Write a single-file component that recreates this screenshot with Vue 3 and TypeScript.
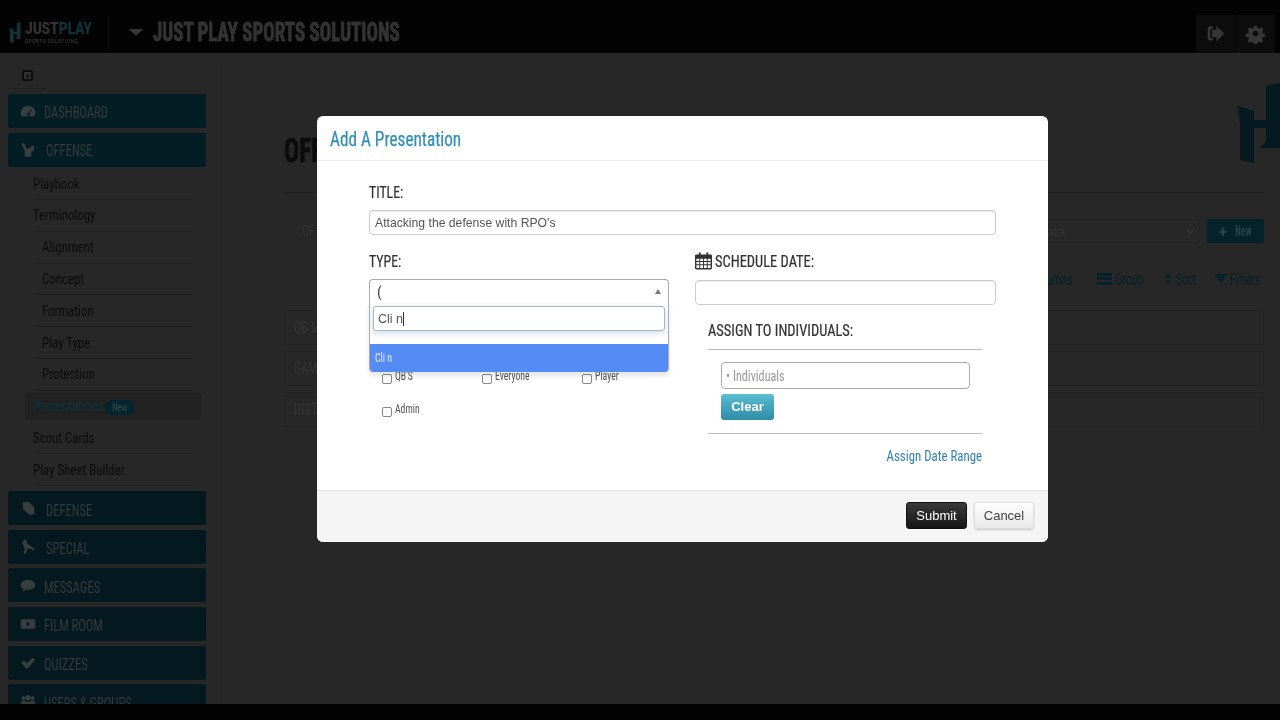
<script setup lang="ts">
interface NavItem { label: string; icon: string; wide?: boolean }
const topNav: NavItem[] = [
  { label: 'DASHBOARD', icon: 'dash' },
  { label: 'OFFENSE', icon: 'off', wide: true },
]
const subNav = [
  { label: 'Playbook', indent: false },
  { label: 'Terminology', indent: false },
  { label: 'Alignment', indent: true },
  { label: 'Concept', indent: true },
  { label: 'Formation', indent: true },
  { label: 'Play Type', indent: true },
  { label: 'Protection', indent: true },
  { label: 'Presentations', indent: false, active: true },
  { label: 'Scout Cards', indent: false },
  { label: 'Play Sheet Builder', indent: false },
]
const bottomNav: NavItem[] = [
  { label: 'DEFENSE', icon: 'def', wide: true },
  { label: 'SPECIAL', icon: 'kick', wide: true },
  { label: 'MESSAGES', icon: 'chat' },
  { label: 'FILM ROOM', icon: 'film' },
  { label: 'QUIZZES', icon: 'check' },
  { label: 'USERS & GROUPS', icon: 'users' },
]
const rows = ['QB M', 'GAM', 'INST']
const roles = ["QB'S", 'Everyone', 'Player', 'Admin']
</script>

<template>
  <div class="screen">
    <header class="topbar">
      <div class="brand">
        <svg class="brand-mark" viewBox="0 0 42 80" width="14" height="21">
          <path d="M0 23L16 28V37H28V3L42 0V65H22L28 58V45H16V80L2 77L2 40z" fill="#12323a" />
        </svg>
        <div class="brand-text">
          <div class="brand-name">JUST<span>PLAY</span></div>
          <div class="brand-sub">SPORTS SOLUTIONS</div>
        </div>
      </div>
      <div class="top-sep"></div>
      <span class="caret"></span>
      <div class="org"><span>JUST PLAY SPORTS SOLUTIONS</span></div>
      <div class="top-actions">
        <div class="top-btn">
          <svg viewBox="0 0 24 24" width="21" height="21"><path d="M9 4H5a2 2 0 0 0-2 2v12a2 2 0 0 0 2 2h4v-3H6V7h3zM13 3l9 9-9 9v-5H8V8h5z" fill="#363636"/></svg>
        </div>
        <div class="top-btn">
          <svg viewBox="0 0 24 24" width="21" height="21"><path fill-rule="evenodd" d="M10 2h4l.6 3 2 .9 2.600-1.700 2.800 2.800-1.700 2.600.9 2 3 .6v4l-3 .6-.9 2 1.700 2.600-2.800 2.800-2.600-1.700-2 .9-.6 3h-4l-.6-3-2-.9-2.600 1.700-2.800-2.800 1.700-2.600-.9-2-3-.6v-4l3-.6.9-2L2 7l2.800-2.800L7.400 5.900l2-.9zM12 8.500a3.500 3.500 0 1 0 0 7 3.500 3.500 0 0 0 0-7z" fill="#363636" transform="translate(1.200 1.200) scale(.9)"/></svg>
        </div>
      </div>
    </header>

    <div class="content">
      <aside class="sidebar">
        <div class="collapse">
          <span class="collapse-icon"><i></i></span>
        </div>
        <nav class="nav">
          <a v-for="n in topNav" :key="n.label" class="nav-main top" :class="{ wide: n.wide }">
            <svg class="nav-icon" viewBox="0 0 24 24">
              <path v-if="n.icon === 'dash'" d="M12 4a11 11 0 0 0-11 11c0 2 .5 3.500 1.500 5h19c1-1.500 1.500-3 1.500-5A11 11 0 0 0 12 4zm1 11l3-6 1 .5-2.500 6.500a2 2 0 1 1-1.500-1z" fill="#383d3e" fill-rule="evenodd"/>
              <path v-else d="M2 2l5 1 3 7 5-1 3-4 4 2-2 7-3 1v6l-5 2-5-2v-8z" fill="#383d3e"/>
            </svg>
            <span class="nav-text">{{ n.label }}</span>
          </a>
          <ul class="sub">
            <li v-for="s in subNav" :key="s.label" :class="{ indent: s.indent, active: s.active }">
              <span class="sub-text">{{ s.label }}</span>
              <em v-if="s.active" class="new"><span>New</span></em>
            </li>
          </ul>
          <a v-for="n in bottomNav" :key="n.label" class="nav-main low" :class="{ wide: n.wide }">
            <svg class="nav-icon" viewBox="0 0 24 24">
              <path v-if="n.icon === 'chat'" d="M12 4C6 4 1 7.500 1 12c0 2.500 1.500 4.500 4 6l-1 4 5-3c1 .2 2 .3 3 .3 6 0 11-3.500 11-7.300S18 4 12 4z" fill="#383d3e"/>
              <path v-else-if="n.icon === 'film'" d="M3 5h18a2 2 0 0 1 2 2v10a2 2 0 0 1-2 2H3a2 2 0 0 1-2-2V7a2 2 0 0 1 2-2zm7 3.500v7l6-3.500z" fill="#383d3e" fill-rule="evenodd"/>
              <path v-else-if="n.icon === 'check'" d="M2 12l4-4 4 4 9-8 4 4-13 13z" fill="#383d3e"/>
              <path v-else-if="n.icon === 'kick'" d="M6 1h4v5l4 3 8 6-1 2-8-3-2 1-3 8-2-1 1-9-4-7z" fill="#383d3e"/>
              <path v-else-if="n.icon === 'users'" d="M5 5a3 3 0 1 1 0 6 3 3 0 0 1 0-6zm7-2a4 4 0 1 1 0 8 4 4 0 0 1 0-8zm7 2a3 3 0 1 1 0 6 3 3 0 0 1 0-6zM1 18v-4l2-2h4l3 1h4l3-1h4l2 2v4z" fill="#383d3e"/>
              <path v-else d="M4 3h9l8 7 1 11-8 1-9-8z" fill="#383d3e"/>
            </svg>
            <span class="nav-text">{{ n.label }}</span>
          </a>
        </nav>
      </aside>

      <main class="main">
        <div class="page-head">
          <h1><span>OFF</span></h1>
          <svg class="logo" viewBox="0 0 42 80" width="42" height="80">
            <path d="M0 23L16 28V37H28V3L42 0V65H22L28 58V45H16V80L2 77L2 40z" fill="#041a20"/>
          </svg>
        </div>
        <div class="filter-row">
          <div class="filter-label"><span class="nx">OF</span></div>
          <div class="filter-select sans">ata <span class="chev"></span></div>
          <button class="new-btn"><b>+</b><span>New</span></button>
        </div>
        <div class="tools">
          <span class="tool t-cols"><span class="nx">umns</span></span>
          <span class="tool t-group"><i class="tool-rows"></i><span class="nx">Group</span></span>
          <span class="tool t-sort"><i class="tool-sort"></i><span class="nx">Sort</span></span>
          <span class="tool t-filter"><i class="tool-filter"></i><span class="nx">Filters</span></span>
        </div>
        <div v-for="r in rows" :key="r" class="row"><span class="nx">{{ r }}</span></div>
      </main>
    </div>

    <div class="video-bar"></div>

    <section class="modal">
      <div class="modal-head"><span class="nt">Add A Presentation</span></div>
      <div class="modal-body">
        <label class="lbl"><span class="nm">TITLE:</span></label>
        <div class="input title-input sans">Attacking the defense with RPO's</div>
        <div class="cols">
          <div class="col">
            <label class="lbl"><span class="nm">TYPE:</span></label>
            <div class="select-wrap">
              <div class="select-head"><span class="typed">(</span><i class="up"></i></div>
              <div class="dropdown">
                <div class="search sans">Cli n<span class="cursor"></span></div>
                <div class="option"><span class="nm">Cli n</span></div>
              </div>
            </div>
            <div class="checks">
              <label v-for="r in roles" :key="r" class="check"><span class="box"></span><span class="nm">{{ r }}</span></label>
            </div>
          </div>
          <div class="col">
            <label class="lbl">
              <svg class="cal" viewBox="0 0 18 18" width="17" height="18"><path fill-rule="evenodd" d="M4 0h2v2h6V0h2v2h2.500A1.500 1.500 0 0 1 18 3.500v13a1.500 1.500 0 0 1-1.500 1.500h-15A1.500 1.500 0 0 1 0 16.500v-13A1.500 1.500 0 0 1 1.500 2H4zM1.500 6.500v2.500h3V6.500zm4 0v2.500h3V6.500zm4 0v2.500h3V6.500zm4 0v2.500h3V6.500zM1.500 10v2.500h3V10zm4 0v2.500h3V10zm4 0v2.500h3V10zm4 0v2.500h3V10zM1.500 13.500V16.500h3v-3zm4 0v3h3v-3zm4 0v3h3v-3zm4 0v3h3v-3z" fill="#333"/></svg>
              <span class="nh">SCHEDULE DATE:</span>
            </label>
            <div class="input date-input"></div>
            <div class="assign">
              <h3><span class="nh">ASSIGN TO INDIVIDUALS:</span></h3>
              <div class="assign-box">
                <div class="ind-input"><span class="nm">• Individuals</span></div>
                <button class="clear sans">Clear</button>
              </div>
              <a class="range"><span>Assign Date Range</span></a>
            </div>
          </div>
        </div>
      </div>
      <div class="modal-foot sans">
        <button class="submit">Submit</button>
        <button class="cancel">Cancel</button>
      </div>
    </section>
  </div>
</template>

<style>
html, body { margin: 0; background: #000; }
</style>

<style scoped>
.screen {
  position: relative;
  width: 1280px;
  height: 720px;
  overflow: hidden;
  background: #272727;
  font-family: "Liberation Sans Narrow", "Roboto Condensed", "Liberation Sans", sans-serif;
  display: flex;
  flex-direction: column;
  filter: blur(.35px);
}
.sans { font-family: "Liberation Sans", Arial, sans-serif; }
.nx, .nm, .nh, .nt, .nav-text, .sub-text { display: inline-block; transform-origin: left center; white-space: nowrap; }
.nx { transform: scaleX(.76); }
.nm { transform: scaleX(.81); }
.nt { transform: scaleX(.82); }
.nh { transform: scaleX(.85); }
.nav-text { transform: scaleX(.74); }
.sub-text { transform: scaleX(.83); }

/* top bar */
.topbar {
  height: 53px;
  box-sizing: border-box;
  padding: 12px 0 0 8px;
  background: #030303;
  display: flex;
  align-items: center;
  flex: none;
}
.brand { display: flex; align-items: center; gap: 3px; width: 100px; }
.brand-name { font-size: 16px; font-weight: 700; line-height: 13px; color: #333; letter-spacing: -.2px; white-space: nowrap; }
.brand-name span { color: #12323a; }
.brand-sub { font-size: 6px; line-height: 6px; margin-top: 3px; color: #2a2a2a; font-weight: 700; letter-spacing: .2px; white-space: nowrap; }
.top-sep { width: 1px; height: 33px; background: #141414; margin: 0 20px 0 0; align-self: center; }
.caret { border: 7px solid transparent; border-top: 7px solid #363636; border-bottom: 0; margin-right: 10px; margin-top: -1px; }
.org { font-size: 25px; font-weight: 700; color: #333; -webkit-text-stroke: .8px #333; }
.org span { display: inline-block; transform: scaleX(.76); transform-origin: left center; white-space: nowrap; }
.top-actions { margin-left: auto; display: flex; gap: 1px; margin-right: 5px; align-self: flex-end; }
.top-btn { width: 39px; height: 38px; background: #0c0c0c; display: flex; align-items: center; justify-content: center; padding-bottom: 2px; box-sizing: border-box; }

.content { flex: 1; display: flex; min-height: 0; }

/* sidebar */
.sidebar { width: 220px; flex: none; padding: 10px 14px 0 8px; box-sizing: border-box; }
.collapse { width: 39px; height: 25px; border-bottom: 1px solid #202020; display: flex; align-items: center; justify-content: center; margin-bottom: 5px; }
.collapse-icon { width: 7px; height: 7px; border: 2px solid #0c0c0c; border-radius: 2px; background: #2e2e2e; display: flex; align-items: center; justify-content: center; }
.collapse-icon i { border: 2px solid transparent; border-right: 3px solid #0c0c0c; border-left: 0; }
.nav { display: flex; flex-direction: column; }
.nav-main {
  height: 34px;
  flex: none;
  background: #03191f;
  border-radius: 2px;
  margin-bottom: 4.6px;
  color: #343a3b;
  font-size: 17px;
  display: flex;
  align-items: center;
  gap: 8px;
  padding-left: 12px;
}
.nav-main.top { background: #031d24; }
.nav-main.wide { gap: 10px; }
.nav-main.top .nav-text { padding-top: 1px; }
.nav-main.low .nav-text { padding-top: 3px; }
.nav-icon { width: 16px; height: 16px; flex: none; }
.sub { list-style: none; margin: -3px 0 5px; padding: 0; }
.sub li {
  height: 31.8px;
  box-sizing: border-box;
  margin: 0 14px 0 25px;
  border-bottom: 1px solid #212121;
  color: #0c0c0c;
  font-size: 15.500px;
  display: flex;
  align-items: center;
  gap: 5px;
}
.sub li.indent { padding-left: 8.500px; }
.sub li.active {
  background: #212121;
  color: #06343e;
  margin: 2px 5px 2.800px 17px;
  padding-left: 8px;
  border-radius: 2px;
  height: 27px;
  border: 0;
}
.new { font-style: normal; font-size: 11px; background: #03262e; color: #34494e; border-radius: 8px; width: 29px; height: 15px; line-height: 15px; text-align: center; margin-left: -18px; margin-top: 3px; }
.new span { display: inline-block; transform: scaleX(.8); }

/* main */
.main { flex: 1; margin-top: 10px; padding: 0 16px 0 63px; min-width: 0; border-left: 1px solid #252525; }
.page-head { border-bottom: 1px solid #1e1e1e; display: flex; align-items: flex-start; height: 129px; }
.page-head h1 { margin: 72px 0 0; font-size: 34px; line-height: 30px; color: #0c0c0c; font-weight: 700; -webkit-text-stroke: .6px #0c0c0c; }
.page-head h1 span { display: inline-block; transform: scaleX(.74); transform-origin: left center; }
.logo { margin-left: auto; margin-top: 20px; margin-right: -16px; }
.filter-row { display: flex; align-items: center; height: 24px; margin-top: 26px; }
.filter-label { padding-left: 18px; color: #353535; font-size: 15px; }
.filter-select { margin-left: auto; width: 153px; box-sizing: border-box; height: 24px; padding: 4px 0 0 0; color: #343434; font-size: 13px; border: 1px solid #242424; border-left: 0; border-radius: 0 3px 3px 0; position: relative; }
.chev { position: absolute; right: 5px; top: 6px; width: 5px; height: 5px; border-right: 2px solid #343434; border-bottom: 2px solid #343434; transform: rotate(45deg); }
.new-btn { margin-left: 7px; width: 57px; height: 24px; background: #03222a; color: #264248; border: 0; border-radius: 2px; font-family: inherit; font-size: 14px; font-weight: 700; padding: 0 0 0 12px; text-align: left; display: flex; align-items: center; }
.new-btn b { margin-right: 8px; font-size: 17px; }
.new-btn span { display: inline-block; transform: scaleX(.68); transform-origin: left center; }
.tools { display: flex; justify-content: flex-end; gap: 21px; height: 24px; margin-top: 24px; color: #04222a; font-size: 16px; align-items: center; padding-right: 5px; }
.tool { display: flex; align-items: center; gap: 3px; white-space: nowrap; }
.t-cols { width: 30px; }
.t-group { width: 46px; }
.t-sort { width: 30px; }
.t-filter { width: 44px; }
.tool-rows { width: 15px; height: 12px; flex: none; background: repeating-linear-gradient(#04222a 0 3px, #272727 3px 4.500px); }
.tool-sort { width: 8px; height: 12px; flex: none; margin-right: 1px; background: conic-gradient(from 145deg at 50% 0, #04222a 70deg, transparent 0) top / 100% 5px no-repeat, conic-gradient(from -35deg at 50% 100%, #04222a 70deg, transparent 0) bottom / 100% 5px no-repeat; }
.tool-filter { width: 0; height: 0; flex: none; border: 6px solid transparent; border-top: 10px solid #04222a; border-bottom: 0; }
.row { height: 35px; border: 1px solid #232323; box-sizing: border-box; margin-bottom: 6px; padding: 7px 9px; color: #353535; font-size: 16px; }
.tools + .row { margin-top: 19px; }

.video-bar { position: absolute; left: 0; right: 0; bottom: 0; height: 16px; background: #030303; }

/* modal */
.modal {
  position: absolute;
  left: 317px;
  top: 116px;
  width: 731px;
  height: 426px;
  background: #fff;
  border-radius: 6px;
  display: flex;
  flex-direction: column;
  overflow: hidden;
  color: #333;
}
.modal-head {
  height: 45px;
  box-sizing: border-box;
  border-bottom: 1px solid #eee;
  padding: 10px 13px;
  font-size: 21px;
  color: #2f8fb7;
  -webkit-text-stroke: .25px #2f8fb7;
  line-height: 26px;
  flex: none;
}
.modal-body { flex: 1; padding: 21px 52px 0; }
.lbl { display: flex; align-items: center; gap: 3px; font-size: 17px; line-height: 20px; height: 20px; color: #333; -webkit-text-stroke: .2px #333; }
.input { box-sizing: border-box; border: 1px solid #ccc; border-radius: 4px; background: #fff; box-shadow: inset 0 1px 1px rgba(0,0,0,.075); }
.title-input { height: 25px; width: 627px; margin-top: 8px; font-size: 12.200px; line-height: 24px; padding-left: 5px; color: #555; }
.cols { display: grid; grid-template-columns: 300px 301px; column-gap: 26px; margin-top: 16px; }
.select-wrap { position: relative; height: 25px; margin-top: 8px; }
.select-head { height: 25px; box-sizing: border-box; border: 1px solid #aaa; border-bottom-color: #ddd; border-radius: 4px 4px 0 0; padding: 2px 8px 2px 7px; font-size: 15px; color: #444; display: flex; justify-content: space-between; align-items: center; }
.typed { line-height: 18px; }
.up { border: 3.500px solid transparent; border-bottom: 5px solid #777; border-top: 0; margin-right: -1px; }
.dropdown { position: absolute; z-index: 2; left: 0; right: 0; top: 24px; height: 69px; box-sizing: border-box; background: #fff; border: 1px solid #aaa; border-top: 0; border-bottom: 0; border-radius: 0 0 4px 4px; box-shadow: 0 4px 5px rgba(0,0,0,.1); padding: 3px; overflow: hidden; }
.search { height: 25px; box-sizing: border-box; border: 1px solid #a9b7c2; border-radius: 3px; font-size: 12.500px; line-height: 25px; padding-left: 4px; color: #555; box-shadow: 0 2px 6px rgba(120,170,210,.4); }
.cursor { display: inline-block; width: 1px; height: 14px; background: #333; vertical-align: -3px; }
.option { position: absolute; left: 0; right: 0; bottom: 0; height: 28px; background: #548cf4; color: #e6eefc; font-size: 12px; line-height: 28px; padding-left: 5px; }
.checks { display: grid; grid-template-columns: 100px 100px 100px; row-gap: 13px; padding: 65px 0 0 13px; }
.check { display: flex; align-items: flex-start; gap: 3px; font-size: 12px; line-height: 14px; height: 20px; color: #555; }
.box { width: 8px; height: 8px; border: 1px solid #888; border-radius: 2px; margin-top: 5px; flex: none; }
.cal { margin-top: -1px; }
.date-input { height: 25px; margin-top: 9px; }
.assign { padding: 0 14px 0 13px; }
.assign h3 { margin: 15px 0 0; font-size: 17px; line-height: 20px; height: 30px; box-sizing: border-box; border-bottom: 1px solid #bbb; font-weight: 400; color: #333; -webkit-text-stroke: .2px #333; }
.assign-box { padding: 12px 13px 13px; border-bottom: 1px solid #bbb; }
.ind-input { width: 249px; height: 27px; box-sizing: border-box; border: 1px solid #aaa; border-radius: 4px; padding-left: 4px; font-size: 15px; line-height: 26px; color: #999; }
.clear { display: block; margin-top: 5px; width: 53px; height: 26px; border: 0; border-radius: 3px; background: linear-gradient(#5cbcd0, #2d8ca8); color: #fff; font-weight: 700; font-size: 13px; padding: 0 0 2px; }
.range { display: block; text-align: right; font-size: 15.500px; color: #2f80b4; margin-top: 13px; line-height: 18px; }
.range span { display: inline-block; transform: scaleX(.83); transform-origin: right center; white-space: nowrap; }
.modal-foot { height: 52px; box-sizing: border-box; background: #f5f5f5; border-top: 1px solid #e5e5e5; display: flex; justify-content: flex-end; align-items: center; gap: 7px; padding: 0 14px 2px 0; flex: none; }
.modal-foot button { width: 60px; height: 27px; border-radius: 3px; font-family: inherit; font-size: 13px; padding: 0; }
.modal-foot .submit { width: 61px; background: linear-gradient(#3a3a3a, #151515); color: #fff; border: 1px solid #111; font-weight: 400; }
.cancel { background: linear-gradient(#fff, #e8e8e8); color: #444; border: 1px solid #ddd; box-shadow: 0 1px 2px rgba(0,0,0,.2); }
</style>
